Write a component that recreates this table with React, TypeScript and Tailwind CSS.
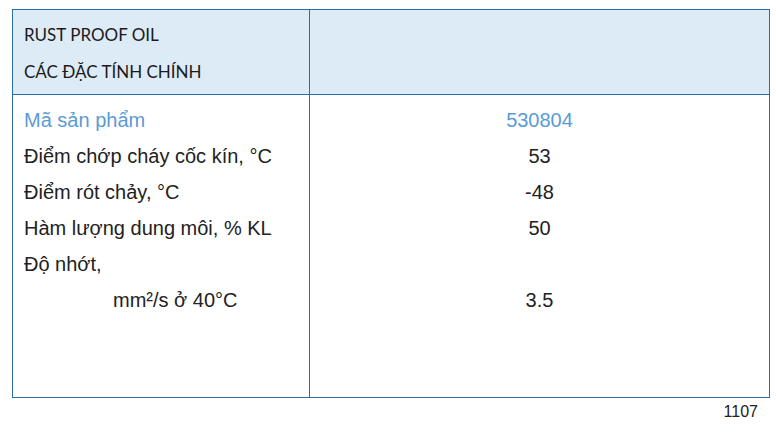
const rows: { label: string; value: string; accent?: boolean; indent?: boolean }[] = [
  { label: 'Mã sản phẩm', value: '530804', accent: true },
  { label: 'Điểm chớp cháy cốc kín, °C', value: '53' },
  { label: 'Điểm rót chảy, °C', value: '-48' },
  { label: 'Hàm lượng dung môi, % KL', value: '50' },
  { label: 'Độ nhớt,', value: '' },
  { label: 'mm²/s ở 40°C', value: '3.5', indent: true },
];

export default function App() {
  return (
    <div className="w-[776px] h-[433px] bg-white pl-[12px] pt-[9px]">
      <div className="w-[758px] border border-[#2a6ea8]">
        <div className="grid grid-cols-[297px_1fr] h-[85px] bg-[#ddebf7] border-b border-[#2a6ea8]">
          <div
            className="border-r border-[#2a6ea8] pl-[11px] pt-[6px] text-[17px] leading-[37px] text-[#1a1a1a]"
            style={{ fontFamily: 'Lato, "Open Sans", sans-serif' }}
          >
            <div>RUST PROOF OIL</div>
            <div>CÁC ĐẶC TÍNH CHÍNH</div>
          </div>
          <div />
        </div>
        <div
          className="grid grid-cols-[297px_1fr] h-[302px] text-[20px] leading-[36px] text-[#222]"
          style={{ fontFamily: '"Liberation Sans", Arial, sans-serif' }}
        >
          <div className="border-r border-[#2a6ea8] pl-[11px] pt-[7px]">
            {rows.map((r) => (
              <div
                key={r.label}
                className={`${r.accent ? 'text-[#5b9bd5]' : ''} ${r.indent ? 'pl-[89px]' : ''}`}
              >
                {r.label}
              </div>
            ))}
          </div>
          <div className="pt-[7px] text-center">
            {rows.map((r) => (
              <div key={r.label} className={`h-[36px] ${r.accent ? 'text-[#5b9bd5]' : ''}`}>
                {r.value}
              </div>
            ))}
          </div>
        </div>
      </div>
      <div
        className="w-[746px] text-right text-[16px] leading-[20px] mt-[4px] text-[#222]"
        style={{ fontFamily: '"Liberation Sans", Arial, sans-serif' }}
      >
        1107
      </div>
    </div>
  );
}
